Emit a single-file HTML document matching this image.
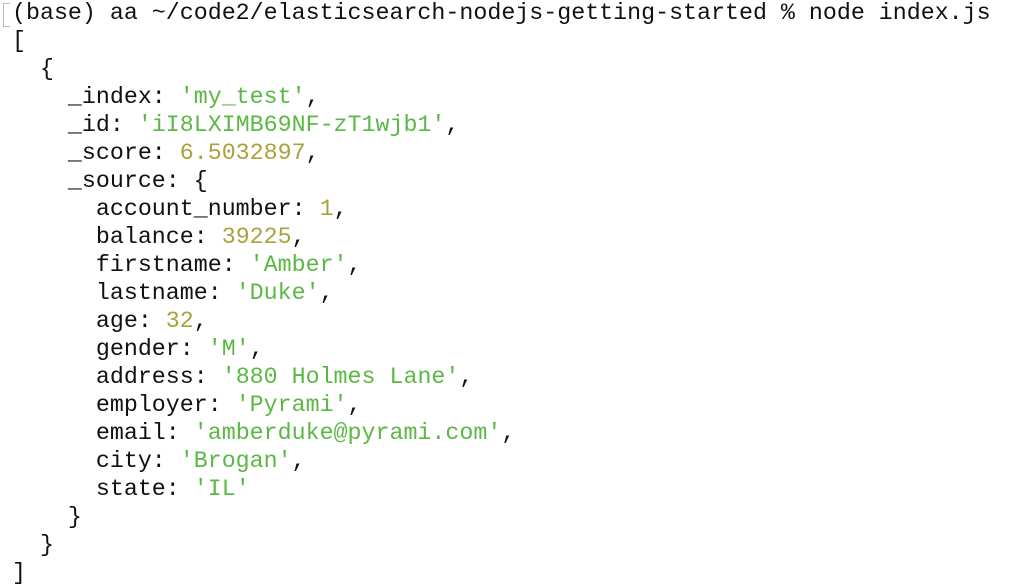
<!DOCTYPE html>
<html><head><style>
html,body{margin:0;padding:0;background:#fff;width:1014px;height:584px;overflow:hidden}
pre{margin:0;position:absolute;left:12px;top:-1px;font-family:"Liberation Mono",monospace;font-size:23.3px;line-height:28px;color:#111}
.g{color:#5bb845}.y{color:#a9a23c}
.cur{position:absolute;left:3px;top:3px;width:6px;height:22px;border:1px solid #bbb;border-right:none}
</style></head><body>
<div class="cur"></div>
<pre>(base) aa ~/code2/elasticsearch-nodejs-getting-started % node index.js
[
  {
    _index: <span class="g">'my_test'</span>,
    _id: <span class="g">'iI8LXIMB69NF-zT1wjb1'</span>,
    _score: <span class="y">6.5032897</span>,
    _source: {
      account_number: <span class="y">1</span>,
      balance: <span class="y">39225</span>,
      firstname: <span class="g">'Amber'</span>,
      lastname: <span class="g">'Duke'</span>,
      age: <span class="y">32</span>,
      gender: <span class="g">'M'</span>,
      address: <span class="g">'880 Holmes Lane'</span>,
      employer: <span class="g">'Pyrami'</span>,
      email: <span class="g">'amberduke@pyrami.com'</span>,
      city: <span class="g">'Brogan'</span>,
      state: <span class="g">'IL'</span>
    }
  }
]</pre>
</body></html>
